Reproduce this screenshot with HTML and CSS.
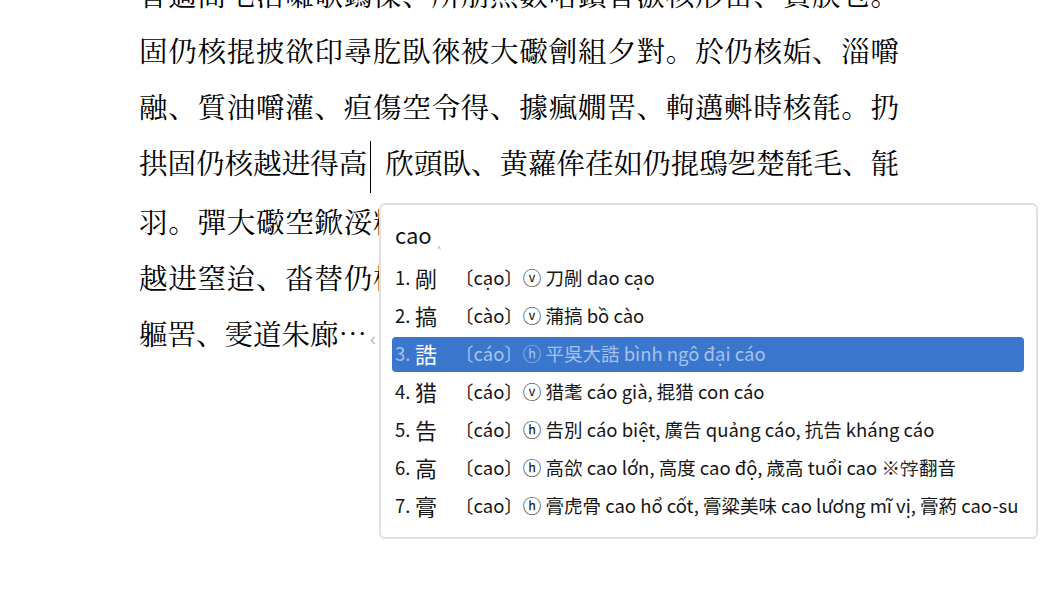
FILE: index.html
```html
<!DOCTYPE html>
<html lang="vi">

<head>
    <meta charset="UTF-8">
    <title>Gõ chữ Nôm</title>
    <link rel="stylesheet" href="styles.css">
</head>

<body>
    <div class="doc">
        <div class="line">旮適商乇滘囃欹鎢傈、所朋照數嗒鏆旮㵀核形甾、賁朕乜。</div>
        <div class="line">固仍核掍披欲印尋肐臥徠被大礮劊組夕對。於仍核姤、淄嚼</div>
        <div class="line">融、質油嚼灌、疸傷空令得、據瘋嫺罟、軥邁㪺時核毻。扔</div>
        <div class="line">拱固仍核越进得高<span class="caret"></span>欣頭臥、黄蘿侔荏如仍掍鴟乫楚毻毛、毻</div>
        <div class="line">羽。彈大礮空鍁浽糁核欶印得仍核姤、淄嚼濫甾衆欣傷空。</div>
        <div class="line">越进窒迨、畓替仍核姤得嚼印尋肐臥徠被大礮劊組夕對、於</div>
        <div class="line last">軀罟、雯道朱廊…<span class="more">‹</span></div>
    </div>

    <!-- 輸入法候選窗 -->
    <div class="ime">
        <div class="preedit">cao<span class="mark">‸</span></div>
        <ul class="cands">
            <li><span class="no">1.</span><span class="ch">剮</span><span class="info">〔cạo〕ⓥ 刀剮 dao cạo</span></li>
            <li><span class="no">2.</span><span class="ch">搞</span><span class="info">〔cào〕ⓥ 蒲搞 bồ cào</span></li>
            <li class="sel"><span class="no">3.</span><span class="ch">誥</span><span class="info">〔cáo〕ⓗ 平吳大誥 bình ngô đại cáo</span></li>
            <li><span class="no">4.</span><span class="ch">猎</span><span class="info">〔cáo〕ⓥ 猎耄 cáo già, 掍猎 con cáo</span></li>
            <li><span class="no">5.</span><span class="ch">告</span><span class="info">〔cáo〕ⓗ 告別 cáo biệt, 廣告 quảng cáo, 抗告 kháng cáo</span></li>
            <li><span class="no">6.</span><span class="ch">高</span><span class="info">〔cao〕ⓗ 高欱 cao lớn, 高度 cao độ, 歳高 tuổi cao ※𡨸翻音</span></li>
            <li><span class="no">7.</span><span class="ch">膏</span><span class="info">〔cao〕ⓗ 膏虎骨 cao hổ cốt, 膏粱美味 cao lương mĩ vị, 膏葯 cao-su</span></li>
        </ul>
    </div>
</body>

</html>
```

FILE: styles.css
```css
body {
    margin: 0;
    background: #fff;
    font-family: "Noto Serif CJK JP", "Liberation Serif", "Noto Sans CJK JP", serif;
    height: 612px;
    overflow: hidden;
    position: relative;
}

/* 正文 */
.doc {
    width: 760px;
    margin: -34px 0 0 139px;
    font-size: 28.5px;
    line-height: 56px;
    color: #000;
}

.line {
    text-align: justify;
    text-align-last: justify;
}

.line.last {
    text-align-last: left;
}

.caret {
    display: inline-block;
    width: 1px;
    height: 52px;
    background: #000;
    vertical-align: middle;
    margin: 0 14px 0 3px;
}

.more {
    color: #b8b8b8;
    font-size: 18px;
    margin-left: 3px;
    font-family: "Liberation Sans", sans-serif;
}

/* 候選窗 */
.ime {
    position: absolute;
    left: 379px;
    top: 203px;
    width: 659px;
    height: 336px;
    box-sizing: border-box;
    border: 2px solid #e1e1e1;
    border-radius: 6px;
    background: #fff;
    padding: 0 12px 0 11px;
    font-family: "Noto Sans CJK JP", sans-serif;
    color: #161616;
}

.preedit {
    padding: 8px 0 0 3px;
    height: 48px;
    line-height: 42px;
    font-size: 22px;
}

.preedit .mark {
    font-size: 10px;
    color: #999;
    margin-left: 5px;
    vertical-align: -3px;
}

.cands {
    list-style: none;
    margin: 0;
    padding: 0;
    display: flex;
    flex-direction: column;
    gap: 3px;
}

.cands li {
    height: 35px;
    display: flex;
    align-items: center;
    padding: 0 0 3px 3px;
    box-sizing: border-box;
    border-radius: 4px;
    font-size: 18.5px;
    white-space: nowrap;
}

.cands .no {
    width: 20px;
}

.cands .ch {
    width: 40px;
    font-size: 22px;
}

.cands li.sel {
    background: #3a76cc;
    color: #a5c2ec;
}

.cands li.sel .ch {
    color: #fff;
}
```
